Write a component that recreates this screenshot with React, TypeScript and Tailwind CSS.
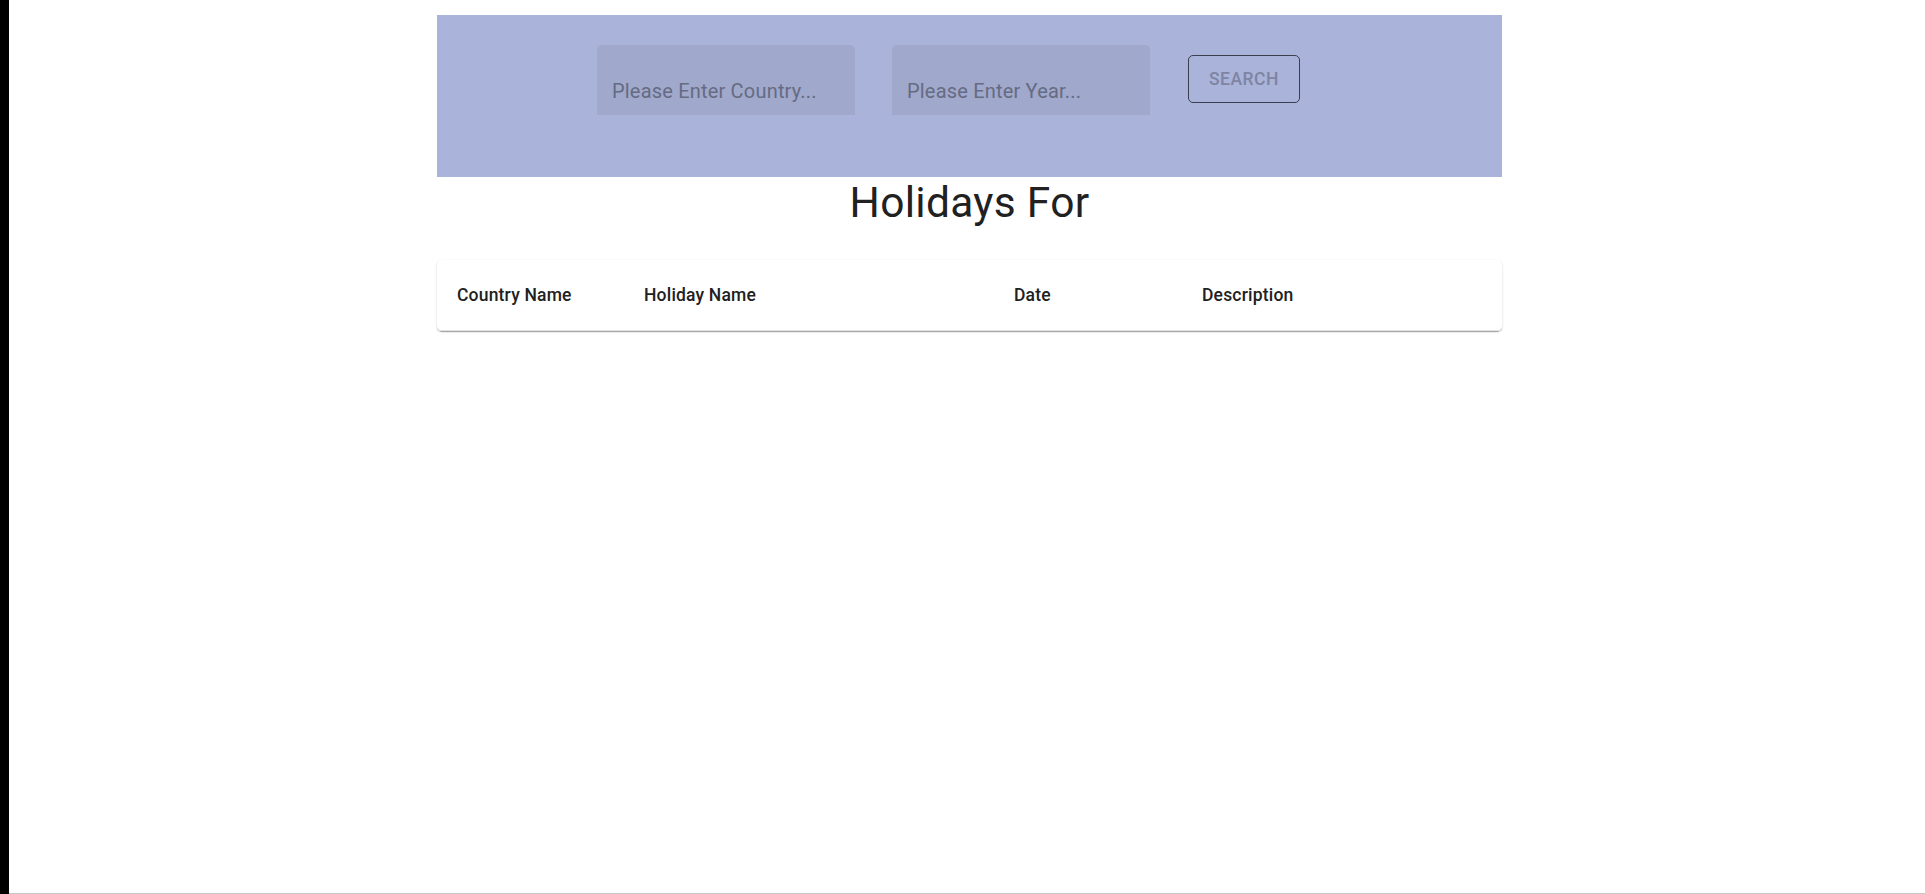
import React from "react";

export default function App() {
  const font = { fontFamily: "Roboto, 'Liberation Sans', sans-serif" };
  return (
    <div className="flex h-[894px] w-full bg-white" style={font}>
      <div className="w-[9px] shrink-0 bg-black" />
      <div className="flex-1 border-b border-[#c8c8c8]">
        <div className="ml-[428px] w-[1065px]">
          <div className="mt-[15px] flex h-[162px] items-start bg-[#aab3d9] pl-[160px] pt-[30px]">
            <div className="h-[70px] w-[258px] rounded-t-[5px] bg-[#a0a8cc] px-[15px] pt-[32px]">
              <input
                className="w-full bg-transparent text-[20px] leading-[29px] tracking-[0.19px] text-[#212121] outline-none placeholder:text-[#666b82]"
                placeholder="Please Enter Country..."
              />
            </div>
            <div className="ml-[37px] h-[70px] w-[258px] rounded-t-[5px] bg-[#a0a8cc] px-[15px] pt-[32px]">
              <input
                className="w-full bg-transparent text-[20px] leading-[29px] tracking-[0.19px] text-[#212121] outline-none placeholder:text-[#666b82]"
                placeholder="Please Enter Year..."
              />
            </div>
            <button className="ml-[38px] mt-[10px] flex h-[48px] w-[112px] items-center justify-center rounded-[5px] border border-[#3c3d4e] text-[17.5px] font-medium tracking-[0.5px] text-[#7e84a1]">
              SEARCH
            </button>
          </div>
          <h4 className="text-center text-[42.5px] font-normal leading-[52.5px] tracking-[0.3px] text-[#212121]">
            Holidays For
          </h4>
          <div className="mt-[30px] rounded-[5px] bg-white shadow-[0_2px_1px_-1px_rgba(0,0,0,0.2),0_1px_1px_0_rgba(0,0,0,0.14),0_1px_3px_0_rgba(0,0,0,0.12)]">
            <div className="grid grid-cols-[187px_370px_188px_1fr] border-b border-[#e0e0e0] text-[17.5px] font-medium leading-[30px] tracking-[0.19px] text-[#212121]">
              <div className="p-[20px]">Country Name</div>
              <div className="p-[20px]">Holiday Name</div>
              <div className="p-[20px]">Date</div>
              <div className="p-[20px]">Description</div>
            </div>
          </div>
        </div>
      </div>
    </div>
  );
}
